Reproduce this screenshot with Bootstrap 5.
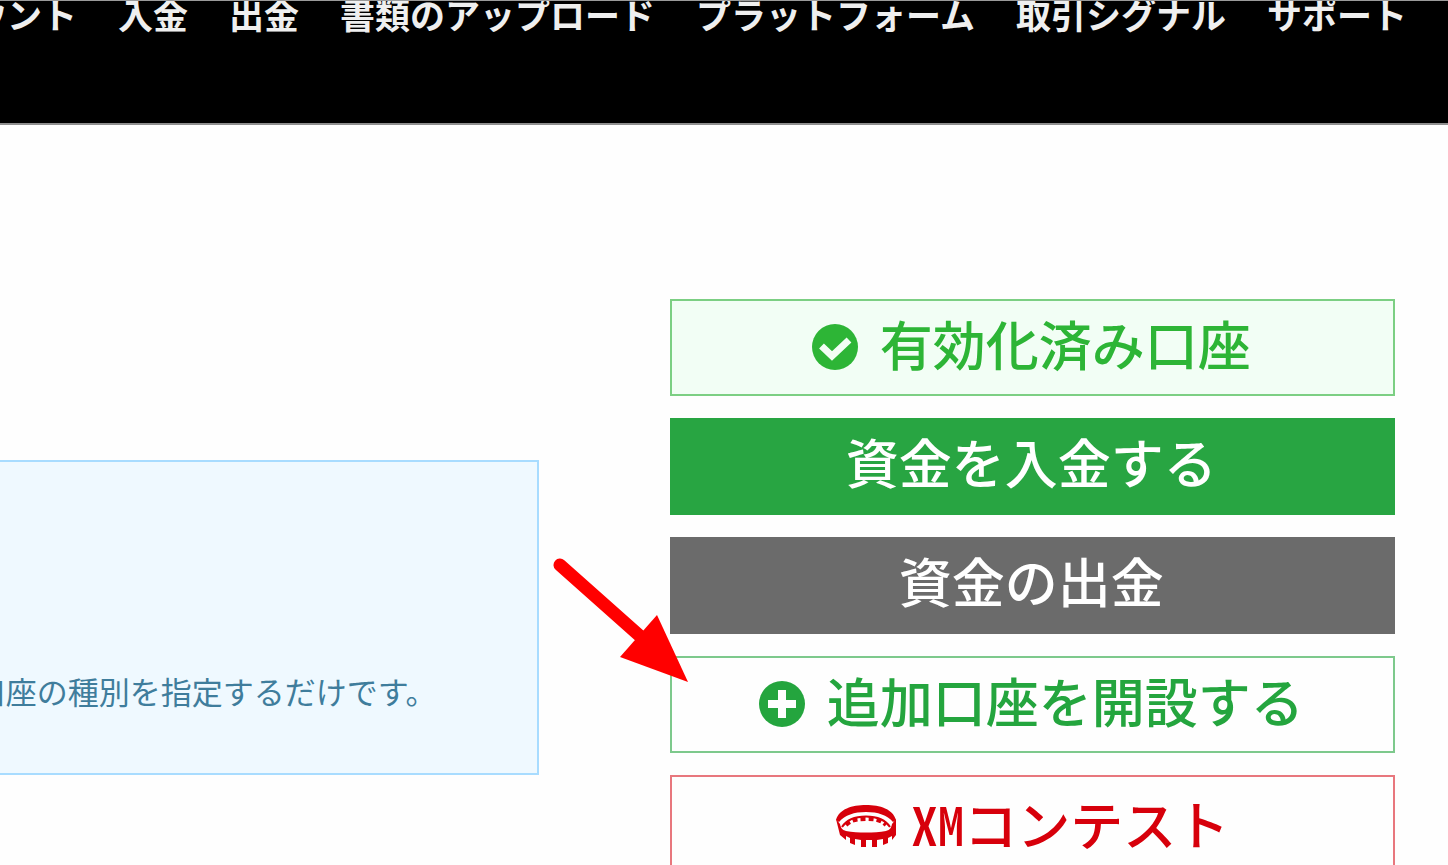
<!DOCTYPE html>
<html lang="ja">
<head>
<meta charset="utf-8">
<meta name="viewport" content="width=device-width, initial-scale=1">
<title>XM</title>
<link rel="stylesheet" href="https://cdn.jsdelivr.net/npm/bootstrap@5.3.0/dist/css/bootstrap.min.css">
<style>
body{font-family:"Noto Sans CJK JP",sans-serif;background:#fefefe;min-height:100vh}
.page{height:100vh}
.topbar{background:#000;height:125px;border-top:1px solid #9a9a9a;border-bottom:2px solid #8f8f8f}
.menu{gap:41px;padding-right:41px;height:31px}
.menu a{color:#efefef;font-size:35px;line-height:36px;font-weight:700}
.content{gap:131px;padding-right:53px}
.notice{background:#eff9ff;border:2px solid #a8dcff;border-left:0;color:#3f7d9c;height:315px;margin-top:335px;padding:0 100px 59px 0;font-size:31px;line-height:46px}
.actions{flex:0 0 52%;gap:22px;padding-top:174px}
.action{width:100%;height:97px;border-radius:0;border:2px solid;padding:0 2px 12px 0;font-size:53px;line-height:60px;font-weight:500}
.action.with-icon{padding:0 2px 2px 0}
.with-icon .label-text{padding-bottom:8px}
.action:hover{opacity:.9}
.active-acc{background:#f2fef5;border-color:#7ccf83;color:#2db536;gap:22px}
.deposit{background:#28a542;border-color:#28a542;color:#fff}
.withdraw{background:#6b6b6b;border-color:#6b6b6b;color:#fff}
.open-acc{background:#fefefe;border-color:#7dc98c;color:#24a53e;gap:22px}
.contest{background:#fefefe;border-color:#e8777d;color:#d7000b;gap:14px}
.action.contest{padding:0}
.with-icon.contest .label-text{padding-bottom:2px}
.half{font-feature-settings:"hwid"}
.pointer{left:-117px;top:-99px;z-index:2}
</style>
</head>
<body>
<div class="page overflow-hidden">
<header class="topbar overflow-hidden">
<nav class="menu d-flex justify-content-end align-items-end text-nowrap">
<a class="text-decoration-none" href="#">アカウント</a>
<a class="text-decoration-none" href="#">入金</a>
<a class="text-decoration-none" href="#">出金</a>
<a class="text-decoration-none" href="#">書類のアップロード</a>
<a class="text-decoration-none" href="#">プラットフォーム</a>
<a class="text-decoration-none" href="#">取引シグナル</a>
<a class="text-decoration-none" href="#">サポート</a>
</nav>
</header>
<main class="content d-flex align-items-start">
<section class="notice d-flex flex-fill justify-content-end align-items-end overflow-hidden text-nowrap">
<p class="m-0">口座の種別を指定するだけです。</p>
</section>
<section class="actions d-flex flex-column">
<button type="button" class="action with-icon active-acc btn d-flex align-items-center justify-content-center">
<svg width="46" height="46" viewBox="0 0 46 46" aria-hidden="true"><circle cx="23" cy="23" r="23" fill="currentColor"/><path d="M9.500 22 20 32 37 16" fill="none" stroke="#f2fef5" stroke-width="7"/></svg>
<span class="label-text">有効化済み口座</span></button>
<button type="button" class="action deposit btn">資金を入金する</button>
<button type="button" class="action withdraw btn">資金の出金</button>
<div class="position-relative">
<button type="button" class="action with-icon open-acc btn d-flex align-items-center justify-content-center">
<svg width="46" height="46" viewBox="0 0 46 46" aria-hidden="true"><circle cx="23" cy="23" r="23" fill="currentColor"/><path d="M23 9v28M9 23h28" fill="none" stroke="#fefefe" stroke-width="8"/></svg>
<span class="label-text">追加口座を開設する</span></button>
<svg class="pointer position-absolute" width="136" height="126" viewBox="0 0 136 126" aria-hidden="true"><path d="M7 8 88 80" stroke="#f00" stroke-width="13" stroke-linecap="round"/><path d="M135 125 104 58 67 100Z" fill="#f00"/></svg>
</div>
<button type="button" class="action with-icon contest btn d-flex align-items-center justify-content-center">
<svg width="62" height="46" viewBox="0 0 62 46" aria-hidden="true"><path fill="currentColor" d="M1 19C4 8 17 4 31 4s27 4 30 15l-3 2C52 14 43 11 31 11S10 14 4 21z"/><path d="M7 26C12 18 21 15.500 31 15.500S50 18 55 26" fill="none" stroke="currentColor" stroke-width="2"/><path d="M11 24C16 19 22 18 31 18s15 1 20 6" fill="none" stroke="currentColor" stroke-width="4" stroke-dasharray="5 3"/><path fill="currentColor" d="M1 18l4 5c1 5 3 6 6 7 12 2 28 2 40 0 3-1 5-2 6-7l4-5v16l-4 5v-4l-4 2v5l-5 2v-6l-6 1v7h-5v-7h-6v7h-5v-7l-6-1v6l-5-2v-5l-4-2v4l-6-5z"/></svg>
<span class="label-text"><span class="half">XM</span>コンテスト</span></button>
</section>
</main>
</div>
<script src="https://cdn.jsdelivr.net/npm/bootstrap@5.3.0/dist/js/bootstrap.bundle.min.js"></script>
</body>
</html>
